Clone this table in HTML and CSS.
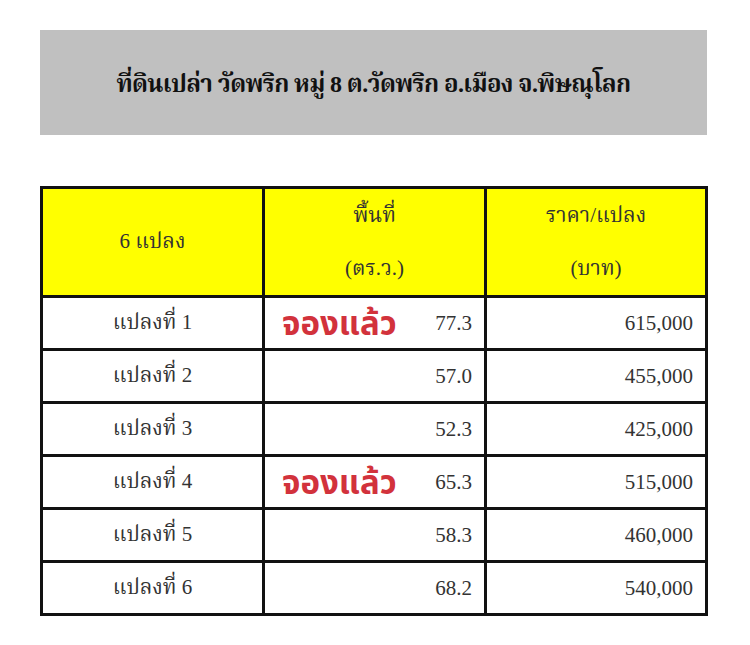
FILE: index.html
```html
<!DOCTYPE html>
<html lang="th">
<head>
<meta charset="utf-8">
<title>ที่ดินเปล่า วัดพริก</title>
<link rel="stylesheet" href="styles.css">
</head>
<body>
<div class="page">
  <div class="banner">ที่ดินเปล่า วัดพริก หมู่ 8 ต.วัดพริก อ.เมือง จ.พิษณุโลก</div>
  <table class="plots">
    <colgroup><col class="c1"><col class="c2"><col class="c3"></colgroup>
    <thead>
      <tr>
        <th>6 แปลง</th>
        <th><span class="l1">พื้นที่</span><span class="l2">(ตร.ว.)</span></th>
        <th><span class="l1">ราคา/แปลง</span><span class="l2">(บาท)</span></th>
      </tr>
    </thead>
    <tbody>
      <tr><td class="name">แปลงที่ 1</td><td><div class="area"><span class="booked">จองแล้ว</span><span class="num">77.3</span></div></td><td class="price">615,000</td></tr>
      <tr><td class="name">แปลงที่ 2</td><td><div class="area"><span></span><span class="num">57.0</span></div></td><td class="price">455,000</td></tr>
      <tr><td class="name">แปลงที่ 3</td><td><div class="area"><span></span><span class="num">52.3</span></div></td><td class="price">425,000</td></tr>
      <tr><td class="name">แปลงที่ 4</td><td><div class="area"><span class="booked">จองแล้ว</span><span class="num">65.3</span></div></td><td class="price">515,000</td></tr>
      <tr><td class="name">แปลงที่ 5</td><td><div class="area"><span></span><span class="num">58.3</span></div></td><td class="price">460,000</td></tr>
      <tr><td class="name">แปลงที่ 6</td><td><div class="area"><span></span><span class="num">68.2</span></div></td><td class="price">540,000</td></tr>
    </tbody>
  </table>
</div>
</body>
</html>
```

FILE: styles.css
```css
html, body {
  margin: 0;
  padding: 0;
  background: #ffffff;
}
body {
  font-family: "Liberation Serif", "Noto Serif Thai", "Noto Sans Thai", serif;
  color: #222;
}
.page {
  padding: 30px 43px 0 40px;
  display: flex;
  flex-direction: column;
}
.banner {
  background: #c0c0c0;
  height: 105px;
  padding-top: 6px;
  box-sizing: border-box;
  display: flex;
  align-items: center;
  justify-content: center;
  font-weight: bold;
  font-size: 24px;
  color: #111;
  letter-spacing: -0.6px;
}
.plots {
  margin-top: 51px;
  border-collapse: collapse;
  width: 665px;
  table-layout: fixed;
  font-size: 21px;
}
.c1 { width: 222px; }
.c2 { width: 222px; }
.c3 { width: 221px; }
.plots th, .plots td {
  border: 3px solid #111;
  padding: 0 12px;
}
.plots th {
  background: #ffff00;
  font-weight: normal;
  height: 102px;
  text-align: center;
  color: #333;
}
.plots th .l1, .plots th .l2 {
  display: block;
  line-height: 53px;
}
.plots td {
  height: 50px;
  color: #333;
}
.name { text-align: center; }
.price { text-align: right; }
.area {
  display: flex;
  justify-content: space-between;
  align-items: center;
  height: 50px;
}
.booked {
  margin-left: 5px;
  font-family: "Noto Sans Thai", "Noto Sans", "DejaVu Sans", sans-serif;
  font-weight: bold;
  font-size: 33px;
  color: #d2323c;
  line-height: 1;
  position: relative;
  top: 2px;
}
```
